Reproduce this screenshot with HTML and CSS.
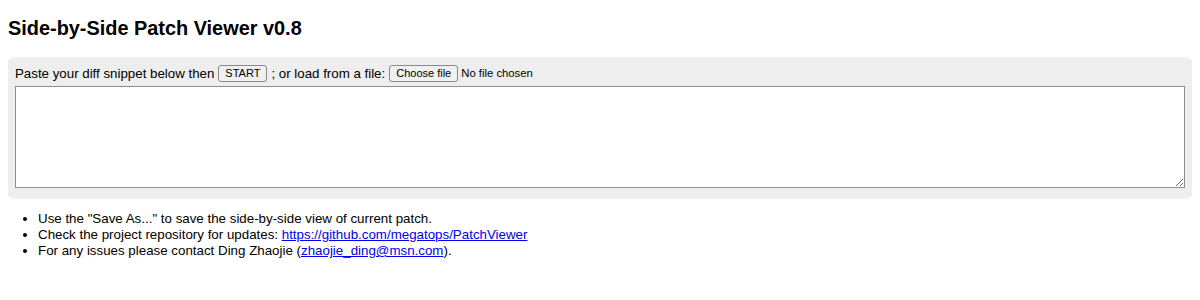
FILE: index.html
```html
<!DOCTYPE html>
<html>
<head>
<meta charset="utf-8">
<title>Side-by-Side Patch Viewer v0.8</title>
<link rel="stylesheet" href="styles.css">
</head>
<body>
<h3 class="title">Side-by-Side Patch Viewer v0.8</h3>
<div class="panel">
  <div class="controls">
    <span>Paste your diff snippet below then</span>
    <button class="btn" type="button">START</button>
    <span>; or load from a file:</span>
    <label class="file">
      <span class="btn">Choose file</span>
      <span class="file-name">No file chosen</span>
    </label>
  </div>
  <textarea class="input"></textarea>
</div>
<ul class="notes">
  <li>Use the "Save As..." to save the side-by-side view of current patch.</li>
  <li>Check the project repository for updates: <a href="#">https://github.com/megatops/PatchViewer</a></li>
  <li>For any issues please contact Ding Zhaojie (<a href="#">zhaojie_ding@msn.com</a>).</li>
</ul>
</body>
</html>
```
FILE: styles.css
```css
body {
  margin: 0 8px 8px;
  font-family: "Liberation Sans", Arial, Helvetica, sans-serif;
  font-size: 13.33px;
  color: #000;
  background: #fff;
}

.title {
  font-size: 19.9px;
  font-weight: bold;
  margin: 17px 0 18px;
  line-height: 22px;
}

.panel {
  background: #eeeeee;
  border-radius: 8px;
  padding: 7px 8px 11px;
  margin: 0 -1px;
}

.controls {
  display: flex;
  align-items: center;
  gap: 4px;
  height: 18px;
  margin-bottom: 4px;
  font-size: 13.3px;
}

.btn {
  font-family: "Liberation Sans", Arial, sans-serif;
  font-size: 11px;
  line-height: 13px;
  padding: 1px 6px;
  background: #f0f0f0;
  border: 1px solid #8a8a8a;
  border-radius: 3px;
  color: #000;
  margin: 0;
  display: inline-block;
}

.file {
  display: inline-flex;
  align-items: center;
  gap: 3px;
}

.file-name {
  font-size: 11.3px;
}

.input {
  display: block;
  box-sizing: border-box;
  width: 100%;
  height: 102px;
  margin: 0;
  border: 1px solid #8f8f8f;
  background: #fff;
  resize: vertical;
}

.notes {
  margin: 12px 0 0;
  padding-left: 30px;
  line-height: 16px;
  font-size: 13.33px;
}

.notes a {
  color: #0000ee;
}
```
